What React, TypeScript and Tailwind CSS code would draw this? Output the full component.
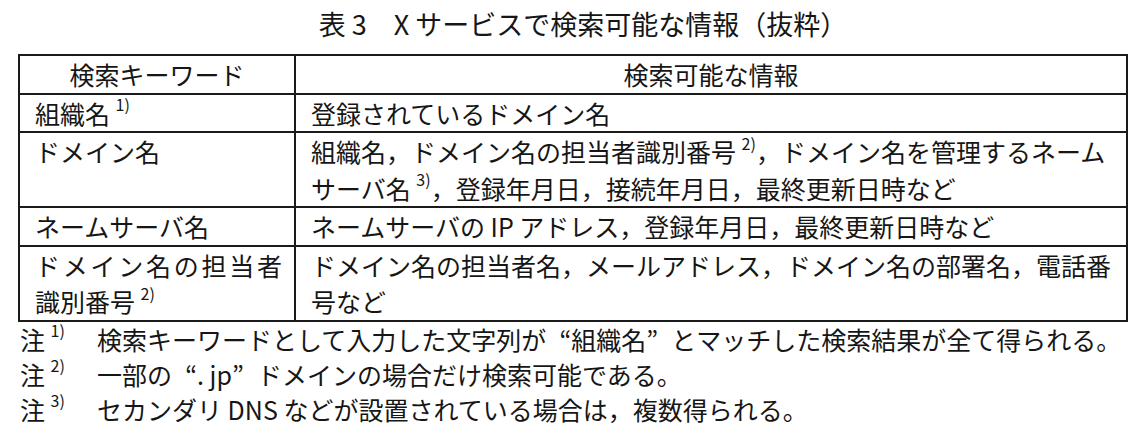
import React from "react";

const font = { fontFamily: '"Noto Sans CJK JP", "Noto Sans", sans-serif' };

function Sup({ n }: { n: number }) {
  return <sup className="relative top-[-3px] align-super text-[16px] leading-none">{n})</sup>;
}

// full-width quote marks, like the typeset original
function Q({ children }: { children: React.ReactNode }) {
  return (
    <>
      <span className="inline-block w-[25px] text-right">“</span>
      {children}
      <span className="inline-block w-[25px] text-left">”</span>
    </>
  );
}

const cell = "border-2 border-[#1a1a1a] p-0 pl-[15px] align-top";

export default function App() {
  return (
    <div lang="ja" style={font} className="h-[448px] w-[1144px] bg-white text-[25px] text-[#161616]">
      <h1 className="pl-[22px] pt-[4px] text-center text-[27px] leading-[40px] font-normal">
        表 3　X サービスで検索可能な情報（抜粋）
      </h1>

      <table className="ml-[18px] mt-[10px] w-[1110px] border-collapse border-[2.5px] border-[#1a1a1a] leading-[36.5px]">
        <thead>
          <tr>
            <th className="w-[276px] border-2 border-[#1a1a1a] p-0 text-center font-normal">検索キーワード</th>
            <th className="border-2 border-[#1a1a1a] p-0 text-center font-normal">検索可能な情報</th>
          </tr>
        </thead>
        <tbody>
          <tr>
            <td className={cell}>
              組織名 <Sup n={1} />
            </td>
            <td className={cell}>登録されているドメイン名</td>
          </tr>
          <tr>
            <td className={cell}>ドメイン名</td>
            <td className={cell}>
              <div>
                組織名，ドメイン名の担当者識別番号 <Sup n={2} />，ドメイン名を管理するネーム
              </div>
              <div>
                サーバ名 <Sup n={3} />，登録年月日，接続年月日，最終更新日時など
              </div>
            </td>
          </tr>
          <tr>
            <td className={cell}>ネームサーバ名</td>
            <td className={cell}>ネームサーバの IP アドレス，登録年月日，最終更新日時など</td>
          </tr>
          <tr>
            <td className={`${cell} pr-[12px]`}>
              <div className="[text-align-last:justify]">ドメイン名の担当者</div>
              <div>
                識別番号 <Sup n={2} />
              </div>
            </td>
            <td className={cell}>
              <div>ドメイン名の担当者名，メールアドレス，ドメイン名の部署名，電話番</div>
              <div>号など</div>
            </td>
          </tr>
        </tbody>
      </table>

      <div className="pl-[20px] leading-[35px]">
        <div className="flex">
          <span className="w-[77px] shrink-0">
            注 <Sup n={1} />
          </span>
          <span>
            検索キーワードとして入力した文字列が<Q>組織名</Q>とマッチした検索結果が全て得られる。
          </span>
        </div>
        <div className="flex">
          <span className="w-[77px] shrink-0">
            注 <Sup n={2} />
          </span>
          <span>
            一部の<Q>. jp</Q>ドメインの場合だけ検索可能である。
          </span>
        </div>
        <div className="flex">
          <span className="w-[77px] shrink-0">
            注 <Sup n={3} />
          </span>
          <span>セカンダリ DNS などが設置されている場合は，複数得られる。</span>
        </div>
      </div>
    </div>
  );
}
